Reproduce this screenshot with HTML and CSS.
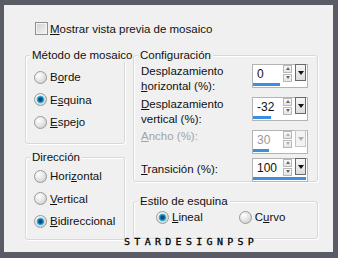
FILE: index.html
```html
<!DOCTYPE html>
<html lang="es">
<head>
  <meta charset="UTF-8" />
  <title>Mosaico</title>
  <link rel="stylesheet" href="styles.css">
</head>
<body>
  <div class="frame">
    <div class="panel">
      <label class="check-row"><span class="check"></span><span><u>M</u>ostrar vista previa de mosaico</span></label>
      <div class="columns">
        <div class="col">
          <div class="group g-method">
            <div class="title">Método de mosaico</div>
            <div class="rows">
              <div class="radio-row"><span class="radio"></span><span>B<u>o</u>rde</span></div>
              <div class="radio-row"><span class="radio on"></span><span>E<u>s</u>quina</span></div>
              <div class="radio-row"><span class="radio"></span><span><u>E</u>spejo</span></div>
            </div>
          </div>
          <div class="group g-dir">
            <div class="title">Dirección</div>
            <div class="rows">
              <div class="radio-row"><span class="radio"></span><span>Hori<u>z</u>ontal</span></div>
              <div class="radio-row"><span class="radio"></span><span><u>V</u>ertical</span></div>
              <div class="radio-row"><span class="radio on"></span><span><u>B</u>idireccional</span></div>
            </div>
          </div>
        </div>
        <div class="col">
          <div class="group g-config">
            <div class="title">Configuración</div>
            <div class="fields">
              <div class="field">
                <div class="label">Desplazamiento<br><u>h</u>orizontal (%):</div>
                <div class="spin"><span class="val">0</span><span class="arrows"><i class="up"></i><i class="dn"></i></span><span class="drop"></span><span class="bar" style="width:27px"></span></div>
              </div>
              <div class="field">
                <div class="label"><u>D</u>esplazamiento<br>vertical (%):</div>
                <div class="spin"><span class="val">-32</span><span class="arrows"><i class="up"></i><i class="dn"></i></span><span class="drop"></span><span class="bar" style="width:18px"></span></div>
              </div>
              <div class="field off">
                <div class="label"><u>A</u>ncho (%):</div>
                <div class="spin"><span class="val">30</span><span class="arrows"><i class="up"></i><i class="dn"></i></span><span class="drop"></span><span class="bar" style="width:16px"></span></div>
              </div>
              <div class="field mid">
                <div class="label"><u>T</u>ransición (%):</div>
                <div class="spin"><span class="val">100</span><span class="arrows"><i class="up"></i><i class="dn"></i></span><span class="drop"></span><span class="bar" style="width:53px"></span></div>
              </div>
            </div>
          </div>
          <div class="group g-corner">
            <div class="title">Estilo de esquina</div>
            <div class="inline-rows">
              <div class="radio-row"><span class="radio on"></span><span><u>L</u>ineal</span></div>
              <div class="radio-row"><span class="radio"></span><span>C<u>u</u>rvo</span></div>
            </div>
          </div>
        </div>
      </div>
      <div class="mark">STARDESIGNPSP</div>
    </div>
  </div>
</body>
</html>
```

FILE: styles.css
```css
body {
  margin: 0;
  font-family: 'Liberation Sans', Arial, sans-serif;
  font-size: 11.5px;
  color: #111;
}
u {
  text-decoration: underline;
  text-underline-offset: 1px;
}
.frame {
  width: 338px;
  height: 258px;
  box-sizing: border-box;
  background: #5a5c65;
  padding: 5px 5px 6px 4px;
}
.panel {
  position: relative;
  height: 100%;
  box-sizing: border-box;
  background: #f0f0f0;
  padding: 17px 0 0 21px;
}
.check-row {
  display: flex;
  align-items: center;
  gap: 2px;
  margin-left: 10px;
  height: 13px;
}
.check {
  width: 11px;
  height: 11px;
  border: 1px solid #8e8f8f;
  background: linear-gradient(135deg, #cfcfcf, #f6f6f6);
  box-shadow: inset 0 0 0 1px #f4f4f4;
}
.columns {
  display: grid;
  grid-template-columns: 100px 185px;
  gap: 8px;
  margin-top: 20px;
}
.group {
  border: 1px solid #d8d8d8;
  border-radius: 3px;
  box-shadow: 1px 1px 0 #fff, inset 1px 1px 0 #fff;
  box-sizing: border-box;
}
.title {
  width: fit-content;
  white-space: nowrap;
  margin: -8px 0 0 4px;
  padding: 0 2px;
  line-height: 14px;
  background: #f0f0f0;
}
.g-method { height: 89px; }
.g-dir { height: 83px; margin-top: 13px; }
.g-config { height: 127px; }
.g-corner { height: 38px; margin-top: 19px; }
.rows {
  padding: 4px 0 0 8px;
}
.g-dir .rows { padding-top: 1px; }
.radio-row {
  display: flex;
  align-items: center;
  gap: 3px;
  height: 22.5px;
  white-space: nowrap;
}
.radio {
  width: 11px;
  height: 11px;
  border-radius: 50%;
  border: 1px solid #9a9a9a;
  background: radial-gradient(circle at 35% 30%, #ffffff, #e2e2e2 55%, #c4c4c4);
}
.radio.on {
  background:
    radial-gradient(circle, #0c4d72 0 1.5px, #1f82b5 2.5px, #56bde6 3.6px, transparent 4.2px),
    radial-gradient(circle at 35% 30%, #ffffff, #e2e2e2 55%, #c4c4c4);
}
.fields {
  display: flex;
  flex-direction: column;
  gap: 4px;
  padding: 2px 9px 0 7px;
}
.field {
  display: flex;
  justify-content: space-between;
  align-items: flex-start;
}
.label {
  line-height: 14.5px;
}
.field.off .label { color: #a3a3a3; margin-top: -1px; }
.field.mid { align-items: center; }
.field.mid .label { margin-top: -2px; }
.spin {
  width: 56px;
  height: 24px;
  box-sizing: border-box;
  border: 1px solid #b4b4b4;
  background: #fff;
  display: grid;
  grid-template-columns: 1fr 9px 11px;
  grid-template-rows: 17px 3px;
  column-gap: 3px;
  padding: 0 1px 0 0;
  row-gap: 1px;
}
.val {
  padding: 1px 0 0 4px;
  line-height: 16px;
  font-size: 12px;
}
.arrows {
  display: flex;
  flex-direction: column;
  justify-content: center;
  gap: 1px;
}
.arrows i {
  position: relative;
  height: 6px;
  border: 1px solid #b8b8b8;
  background: linear-gradient(#fafafa, #e4e4e4);
}
.arrows i::after {
  content: "";
  position: absolute;
  left: 1.5px;
  border-left: 2.5px solid transparent;
  border-right: 2.5px solid transparent;
}
.arrows .up::after { top: 1px; border-bottom: 3px solid #666; }
.arrows .dn::after { top: 1px; border-top: 3px solid #666; }
.drop {
  position: relative;
  margin-top: -1px;
  height: 17px;
  box-sizing: border-box;
  border: 1px solid #6a6a6a;
  background: linear-gradient(#f6f6f6, #dcdcdc);
}
.drop::after {
  content: "";
  position: absolute;
  left: 1.5px;
  top: 6px;
  border-left: 3.5px solid transparent;
  border-right: 3.5px solid transparent;
  border-top: 4px solid #111;
}
.bar {
  grid-column: 1 / -1;
  height: 3px;
  background: #3b8fe3;
}
.field.off .val { color: #999; }
.field.off .arrows i::after { border-bottom-color: #b0b0b0; border-top-color: #b0b0b0; }
.field.off .up::after { border-top-color: transparent; }
.field.off .dn::after { border-bottom-color: transparent; }
.field.off .drop { border-color: #c6c6c6; background: #f3f3f3; }
.field.off .drop::after { border-top-color: #b0b0b0; }
.inline-rows {
  display: flex;
  padding: 0 0 0 22px;
  margin-top: 1px;
}
.inline-rows .radio-row { height: 16px; }
.inline-rows .radio-row + .radio-row { margin-left: 36px; }
.mark {
  position: absolute;
  left: 120px;
  top: 232px;
  font-family: 'DejaVu Sans Mono', monospace;
  font-size: 10px;
  letter-spacing: 4.3px;
  line-height: 10px;
  color: #000;
  -webkit-text-stroke: 0.3px #000;
  transform: scaleY(0.85);
}
```
